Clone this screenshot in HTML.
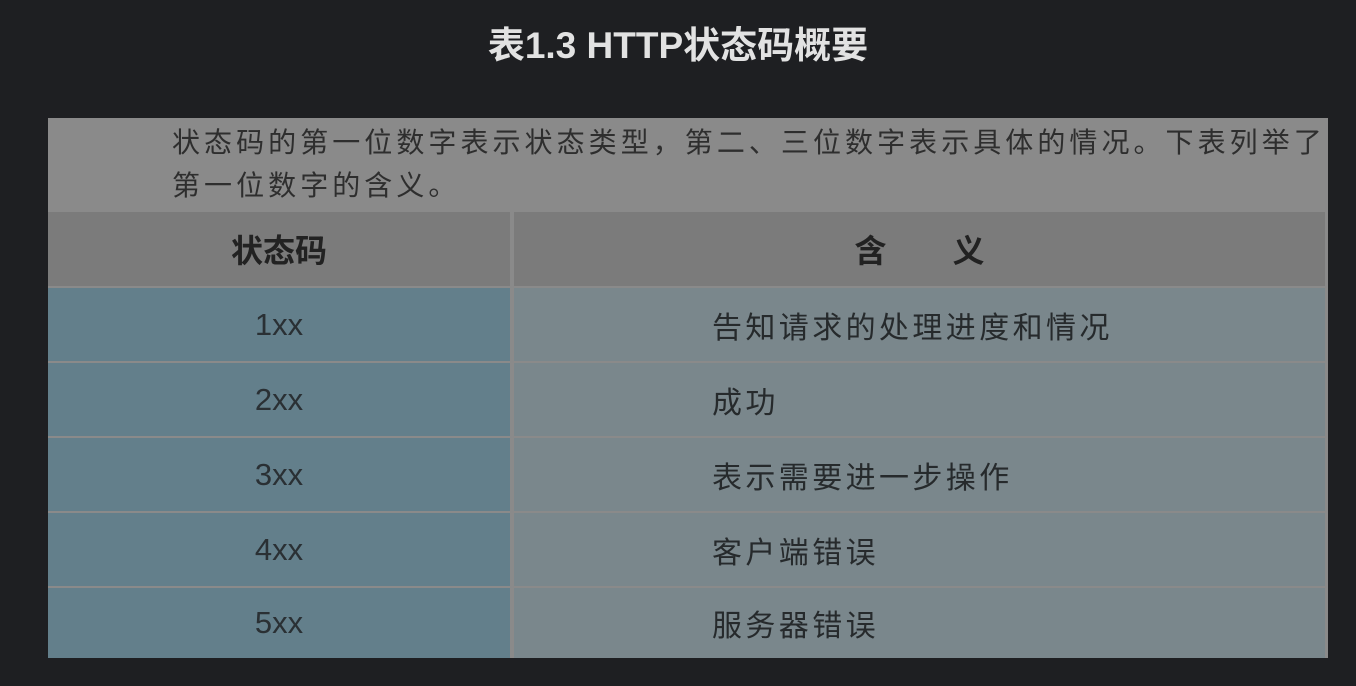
<!DOCTYPE html><html><head><meta charset="utf-8"><style>
body{margin:0;width:1356px;height:686px;background:#1e1f22;position:relative;overflow:hidden;font-family:"Liberation Sans","Noto Sans CJK SC",sans-serif}
.t{position:absolute;top:22px;left:0;width:1356px;text-align:center;color:#e2e2e2;font-size:37px;font-weight:bold;line-height:48px}
.img{position:absolute;left:48px;top:118px;width:1280px;height:540px;background:#8a8a8a}
.p{position:absolute;left:124px;top:3px;font-size:28px;line-height:43px;color:#2e2e2e;letter-spacing:4.05px;white-space:nowrap}
.c{position:absolute;box-sizing:border-box;font-size:30px;color:#262a2c;display:flex;align-items:center}
.h{background:#7b7b7b;font-weight:bold;justify-content:center;color:#222;font-size:32px}
.l{background:#637f8b;justify-content:center;color:#2a3034;font-size:31px}
.r{background:#7a878c;padding-left:198px;letter-spacing:3.4px}
</style></head><body>
<div class="t">表1.3 HTTP状态码概要</div>
<div class="img">
<div class="p">状态码的第一位数字表示状态类型，第二、三位数字表示具体的情况。下表列举了<br>第一位数字的含义。</div>
<div class="c h" style="left:0;top:94px;width:462px;height:74px">状态码</div>
<div class="c h" style="left:466px;top:94px;width:811px;height:74px;letter-spacing:66px;padding-left:66px">含义</div>
<div class="c l" style="left:0;top:170px;width:462px;height:73px">1xx</div>
<div class="c r" style="left:466px;top:170px;width:811px;height:73px">告知请求的处理进度和情况</div>
<div class="c l" style="left:0;top:245px;width:462px;height:73px">2xx</div>
<div class="c r" style="left:466px;top:245px;width:811px;height:73px">成功</div>
<div class="c l" style="left:0;top:320px;width:462px;height:73px">3xx</div>
<div class="c r" style="left:466px;top:320px;width:811px;height:73px">表示需要进一步操作</div>
<div class="c l" style="left:0;top:395px;width:462px;height:73px">4xx</div>
<div class="c r" style="left:466px;top:395px;width:811px;height:73px">客户端错误</div>
<div class="c l" style="left:0;top:470px;width:462px;height:70px">5xx</div>
<div class="c r" style="left:466px;top:470px;width:811px;height:70px">服务器错误</div>
</div>
</body></html>
